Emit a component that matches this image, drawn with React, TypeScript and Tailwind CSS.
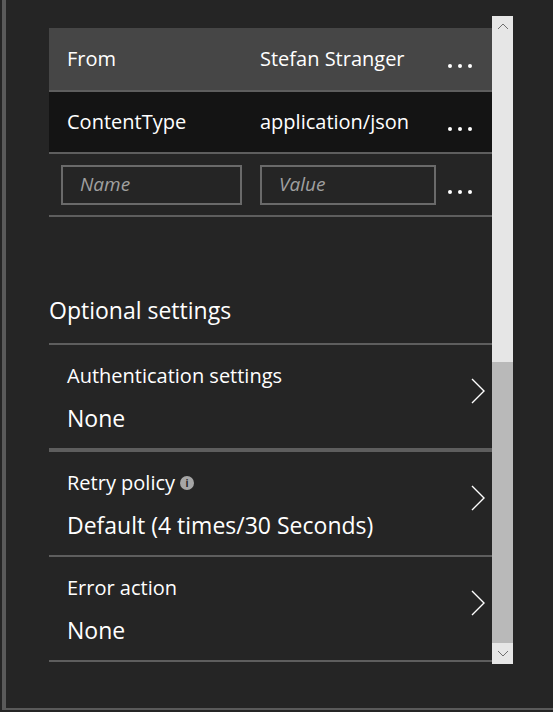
const font = { fontFamily: '"Segoe UI", "Open Sans", sans-serif' };

function Dots() {
  return (
    <div className="flex gap-[6px] pt-[14px]">
      <span className="w-[4px] h-[4px] bg-white rounded-full" />
      <span className="w-[4px] h-[4px] bg-white rounded-full" />
      <span className="w-[4px] h-[4px] bg-white rounded-full" />
    </div>
  );
}

function HeaderRow({ name, value, dark }: { name: string; value: string; dark?: boolean }) {
  return (
    <div
      className={`flex items-center border-b-2 border-[#5e5e5e] text-white text-[20px] ${
        dark ? "h-[62px] bg-[#141414]" : "h-[64px] bg-[#464646]"
      }`}
    >
      <div className="w-[211px] pl-[18px]">{name}</div>
      <div className="flex-1">{value}</div>
      <div className="pr-[20px]">
        <Dots />
      </div>
    </div>
  );
}

function InfoIcon() {
  return (
    <span className="inline-flex items-center justify-center w-[14px] h-[14px] rounded-full bg-[#a6a6a6] text-[#252525] text-[10px] font-bold leading-none ml-[5px] align-middle">
      i
    </span>
  );
}

function Chevron() {
  return (
    <svg width="16" height="28" viewBox="0 0 16 28" className="shrink-0 mb-[12px]">
      <path d="M2 2 L14 14 L2 26" fill="none" stroke="#ffffff" strokeWidth="1.4" />
    </svg>
  );
}

function SettingRow({
  label,
  value,
  info,
  thick,
}: {
  label: string;
  value: string;
  info?: boolean;
  thick?: boolean;
}) {
  return (
    <div
      className={`flex items-center pl-[18px] pr-[6px] border-b-[#5e5e5e] ${
        thick ? "border-b-4 h-[107px]" : "border-b-2 h-[105px]"
      }`}
    >
      <div className="flex-1 flex flex-col gap-[13px] pt-[1px]">
        <div className="text-[20px] text-white leading-[28px] flex items-center">
          {label}
          {info && <InfoIcon />}
        </div>
        <div className="text-[23px] text-white leading-[30px]">{value}</div>
      </div>
      <Chevron />
    </div>
  );
}

function Scrollbar() {
  return (
    <div className="w-[21px] h-[648px] mt-[16px] bg-[#e6e6e6] flex flex-col">
      <div className="h-[21px] flex items-center justify-center">
        <svg width="12" height="7" viewBox="0 0 12 7">
          <path d="M1 6 L6 1 L11 6" fill="none" stroke="#6f6f6f" strokeWidth="1" />
        </svg>
      </div>
      <div className="h-[325px]" />
      <div className="flex-1 bg-[#b9b9b9]" />
      <div className="h-[21px] flex items-center justify-center">
        <svg width="12" height="7" viewBox="0 0 12 7">
          <path d="M1 1 L6 6 L11 1" fill="none" stroke="#6f6f6f" strokeWidth="1" />
        </svg>
      </div>
    </div>
  );
}

export default function App() {
  return (
    <div className="w-[553px] h-[712px] bg-[#252525] pl-[2px] pb-[2px]" style={font}>
      <div className="h-full border-l-4 border-b-2 border-[#5a5a5a] flex">
        <div className="w-[443px] ml-[43px] pt-[28px]">
          <HeaderRow name="From" value="Stefan Stranger" />
          <HeaderRow name="ContentType" value="application/json" dark />
          <div className="flex items-center h-[63px] pl-[12px] pr-[20px] border-b-2 border-[#5e5e5e]">
            <div className="w-[181px] shrink-0 h-[40px] border-2 border-[#6a6a6a] pl-[17px] flex items-center italic text-[19px] text-[#a0a0a0]">
              Name
            </div>
            <div className="w-[176px] shrink-0 ml-[18px] h-[40px] border-2 border-[#6a6a6a] pl-[17px] flex items-center italic text-[19px] text-[#a0a0a0]">
              Value
            </div>
            <div className="flex-1 flex justify-end">
              <Dots />
            </div>
          </div>
          <div className="h-[128px] flex items-end pb-[16px] text-[23px] text-white border-b-2 border-[#5e5e5e]">
            Optional settings
          </div>
          <SettingRow label="Authentication settings" value="None" thick />
          <SettingRow label="Retry policy" value="Default (4 times/30 Seconds)" info />
          <SettingRow label="Error action" value="None" />
        </div>
        <Scrollbar />
      </div>
    </div>
  );
}
